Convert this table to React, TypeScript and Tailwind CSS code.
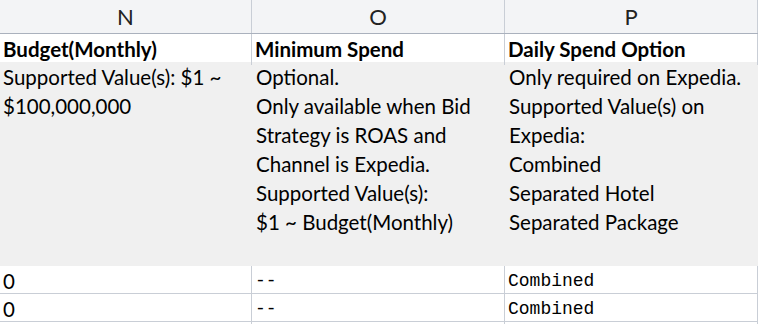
const cols = ['N', 'O', 'P']

const body = "font-['Lato','Open_Sans',sans-serif]"
const mono = "font-['Liberation_Mono',monospace]"

export default function App() {
  return (
    <div className={`w-[758px] h-[324px] overflow-hidden bg-white text-black ${body}`}>
      {/* Column letters */}
      <div className="grid grid-cols-[252px_253px_253px] h-[34px] bg-[#f3f4f6] border-b border-[#aab1bd]">
        {cols.map((c) => (
          <div
            key={c}
            className="flex items-center justify-center border-r border-[#c9ced6] text-[22px] text-[#222]"
          >
            {c}
          </div>
        ))}
      </div>

      {/* Header row */}
      <div className="grid grid-cols-[252px_253px_253px] h-[28px] bg-white text-[20.5px] font-bold">
        <div className="pl-[3px] flex items-center border-r border-[#c9ced6]">Budget(Monthly)</div>
        <div className="pl-[3px] flex items-center border-r border-[#c9ced6]">Minimum Spend</div>
        <div className="pl-[3px] flex items-center border-r border-[#c9ced6]">Daily Spend Option</div>
      </div>

      {/* Description row */}
      <div className="grid grid-cols-[252px_253px_253px] h-[204px] bg-[#f0f0f0] text-[20.5px] leading-[29px]">
        <div className="pl-[3px] pt-[1px]">
          Supported Value(s): $1 ~<br />$100,000,000
        </div>
        <div className="pl-[4px] pt-[1px]">
          Optional.
          <br />
          Only available when Bid
          <br />
          Strategy is ROAS and
          <br />
          Channel is Expedia.
          <br />
          Supported Value(s):
          <br />
          $1 ~ Budget(Monthly)
        </div>
        <div className="pl-[4px] pt-[1px]">
          Only required on Expedia.
          <br />
          Supported Value(s) on
          <br />
          Expedia:
          <br />
          Combined
          <br />
          Separated Hotel
          <br />
          Separated Package
        </div>
      </div>

      {/* Data rows */}
      {[0, 1].map((i) => (
        <div
          key={i}
          className="grid grid-cols-[252px_253px_253px] h-[28px] border-b border-[#c9ced6] text-[20.5px]"
        >
          <div className="pl-[3px] flex items-center border-r border-[#c9ced6]">0</div>
          <div className={`pl-[3px] flex items-center border-r border-[#c9ced6] ${mono} text-[18px]`}>--</div>
          <div className={`pl-[3px] flex items-center border-r border-[#c9ced6] ${mono} text-[18px]`}>Combined</div>
        </div>
      ))}
    </div>
  )
}
